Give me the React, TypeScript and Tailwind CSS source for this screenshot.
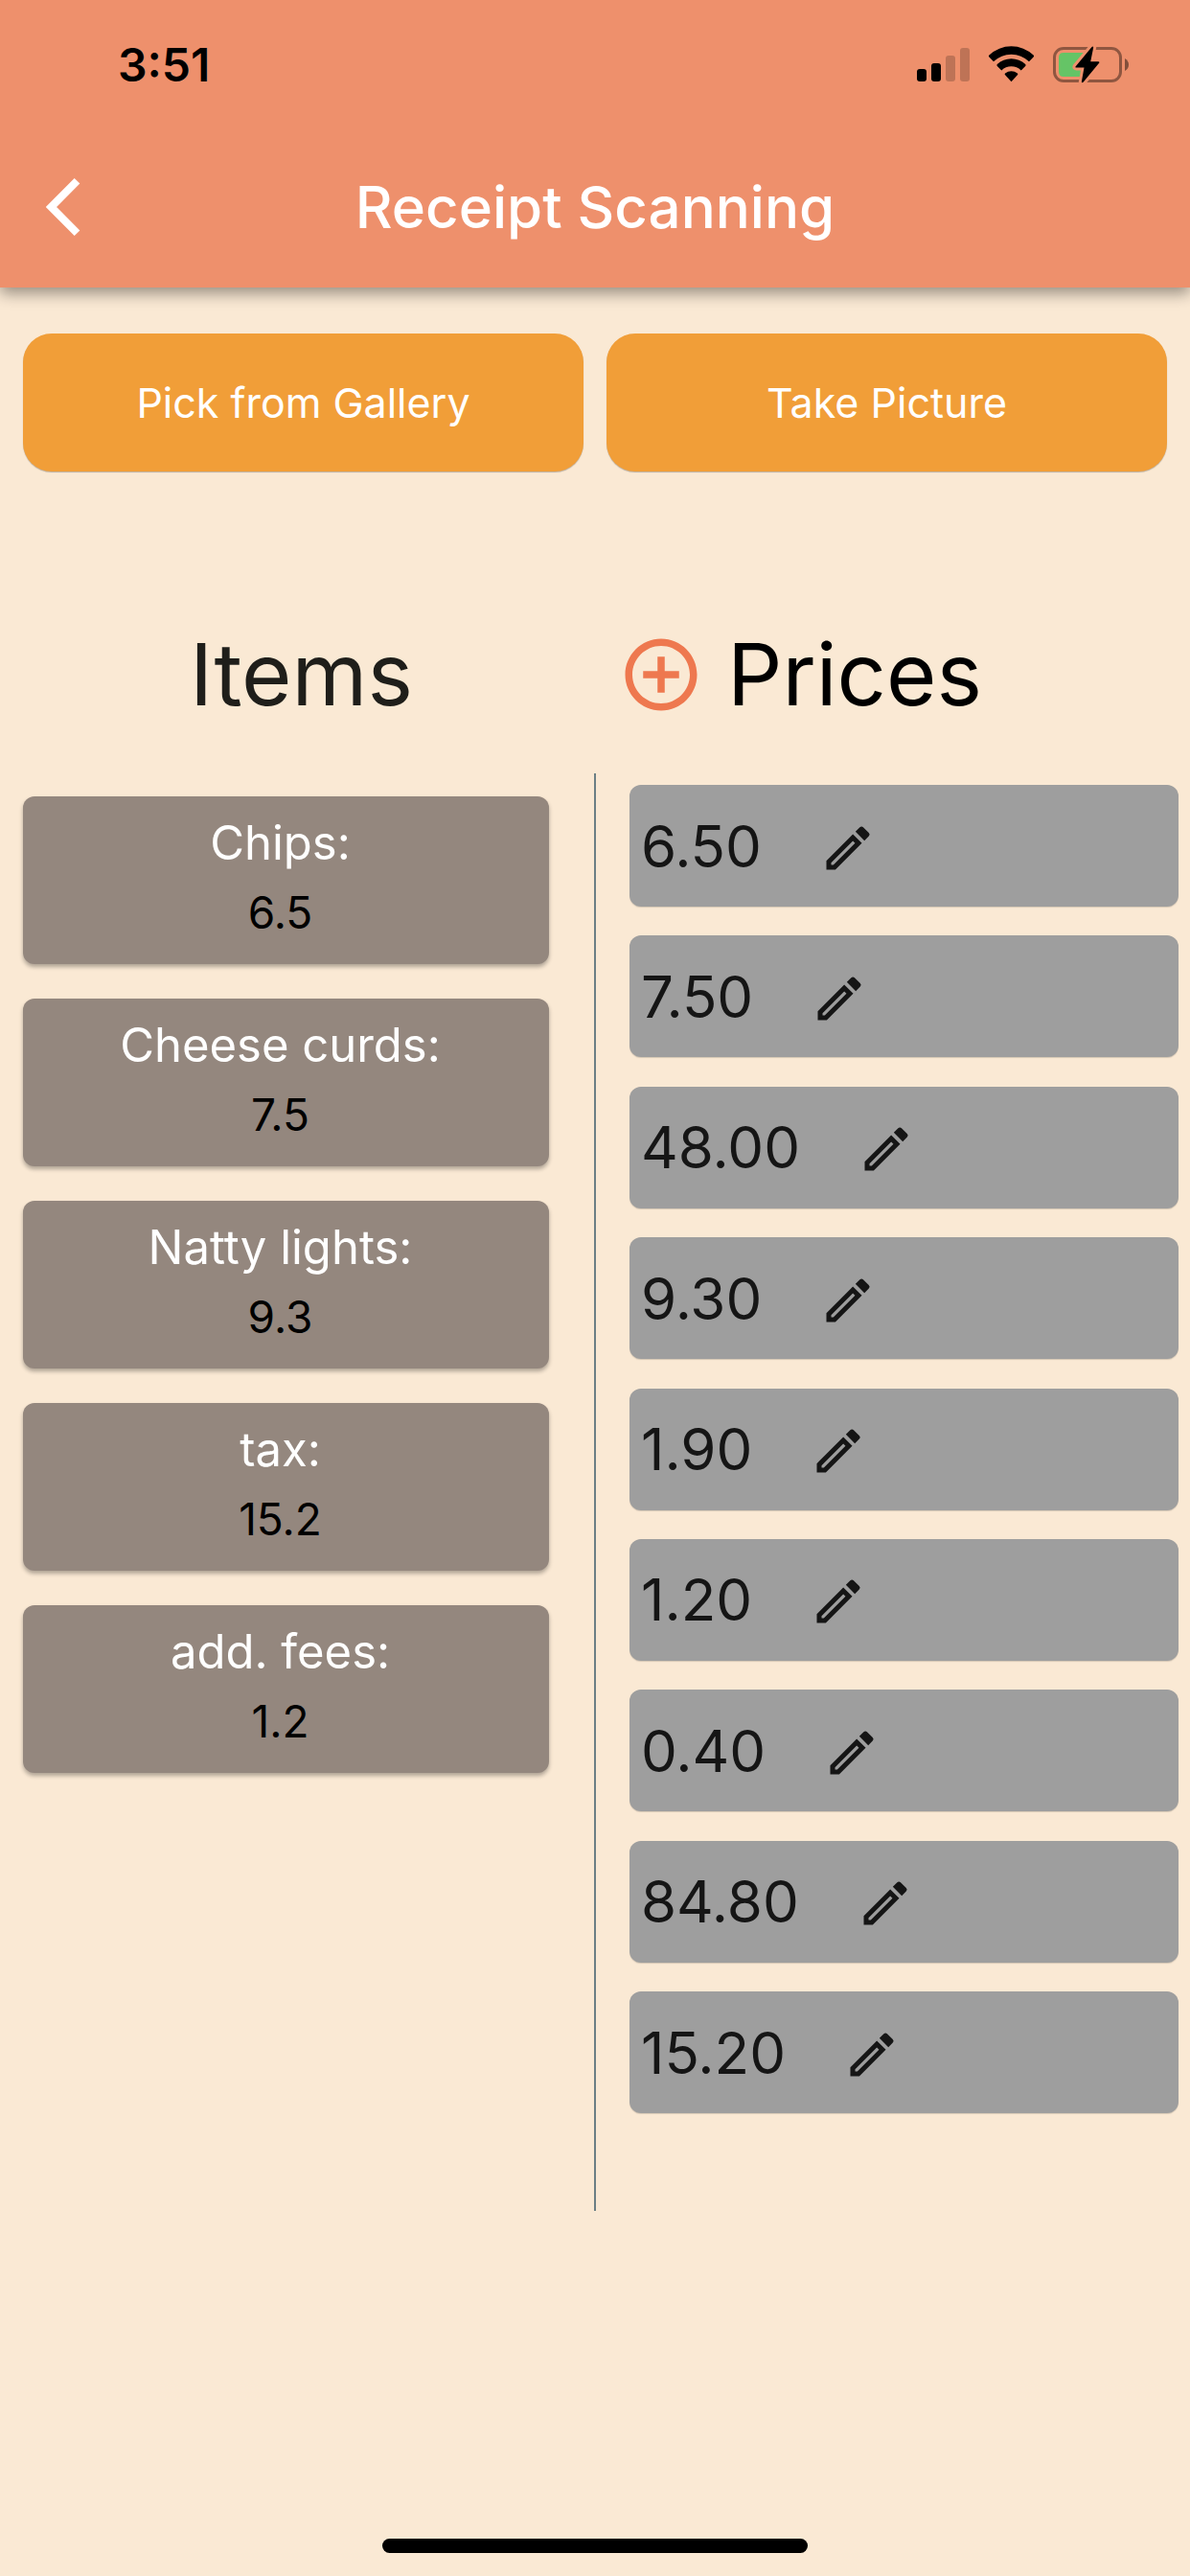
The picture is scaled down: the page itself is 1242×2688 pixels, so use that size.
import { MdAddCircleOutline, MdOutlineEdit } from "react-icons/md";

const items = [
  { name: "Chips:", price: "6.5" },
  { name: "Cheese curds:", price: "7.5" },
  { name: "Natty lights:", price: "9.3" },
  { name: "tax:", price: "15.2" },
  { name: "add. fees:", price: "1.2" },
];

const prices = ["6.50", "7.50", "48.00", "9.30", "1.90", "1.20", "0.40", "84.80", "15.20"];

function StatusIcons() {
  return (
    <svg width="222" height="40" viewBox="957 48 222 40" role="img" aria-label="Signal, Wi-Fi and battery charging">
      <rect x="957" y="72" width="10" height="13" rx="3" />
      <rect x="972" y="66" width="10" height="19" rx="3" />
      <g fillOpacity="0.2">
        <rect x="987" y="58" width="10" height="27" rx="3" />
        <rect x="1002" y="50" width="10" height="35" rx="3" />
      </g>
      <path d="M1037 64.2 L1032.4 59.6 Q1031.4 58.6 1032.4 57.6 A33.5 33.5 0 0 1 1078.6 57.6 Q1079.6 58.6 1078.6 59.6 L1074 64.2 A26.5 26.5 0 0 0 1037 64.2 Z" />
      <path d="M1045.3 73.4 L1040.8 68.9 Q1039.9 68 1040.8 67.1 A21.5 21.5 0 0 1 1070.2 67.1 Q1071.1 68 1070.2 68.9 L1065.7 73.4 A14.8 14.8 0 0 0 1045.3 73.4 Z" />
      <path d="M1055.5 85.3 L1048.9 78.1 Q1048.2 77.2 1049.1 76.5 A10.5 10.5 0 0 1 1061.9 76.5 Q1062.8 77.2 1062.1 78.1 Z" />
      <rect x="1100.5" y="50.5" width="69" height="34" rx="9.5" fill="none" stroke="#000" strokeOpacity="0.4" strokeWidth="3" />
      <path d="M1174 61 Q1178 63.5 1178 67.5 Q1178 71.5 1174 74 Z" fillOpacity="0.45" />
      <path d="M1110 55 H1136 L1128 80 H1110 Q1105 80 1105 75 V60 Q1105 55 1110 55 Z" fill="#65C466" />
      <path
        d="M1139.5 49 L1122.5 69.5 Q1122 70.5 1123.5 70.5 H1131.5 L1128.8 85.5 Q1129.5 87 1130.8 85.5 L1147.3 65.5 Q1147.6 64.3 1146.3 64.3 H1138.2 L1141.2 49.5 Q1140.6 47.8 1139.5 49 Z"
        fill="#000"
        stroke="#EE906C"
        strokeWidth="6"
        strokeLinejoin="round"
        paintOrder="stroke"
      />
    </svg>
  );
}

function Header() {
  return (
    <header className="relative bg-[#EE906C] shadow-[0_6px_15px_rgba(0,0,0,0.4)]">
      <div className="flex h-[132px] items-center justify-between pt-1 pr-[63px] pl-[123px]">
        <time className="text-[48px] leading-none font-semibold text-black">3:51</time>
        <StatusIcons />
      </div>
      <div className="grid h-[168px] grid-cols-[144px_1fr_144px] items-center">
        <button type="button" aria-label="Back" className="flex h-full items-center pl-12">
          <svg width="36" height="60" viewBox="0 0 36 60" fill="none" stroke="#fff" strokeWidth="8">
            <path d="M32.5 2.8 L5.5 30 L32.5 57.2" />
          </svg>
        </button>
        <h1 className="text-center text-[60px] leading-none font-medium text-white">Receipt Scanning</h1>
      </div>
    </header>
  );
}

function ActionButton({ label }: { label: string }) {
  return (
    <button
      type="button"
      className="h-36 flex-1 rounded-[30px] bg-[#F19E38] text-[43px] leading-none text-white shadow-[0_1px_1px_rgba(0,0,0,0.25)]"
    >
      {label}
    </button>
  );
}

function ItemCard({ name, price }: { name: string; price: string }) {
  return (
    <button
      type="button"
      className="flex h-[175px] w-full flex-col items-center rounded-xl bg-[#94877E] pt-[13px] pr-3 leading-[72px] shadow-[0_3px_4px_rgba(0,0,0,0.3)]"
    >
      <span className="text-[49px] text-white">{name}</span>
      <span className="text-[46px] text-black">{price}</span>
    </button>
  );
}

function PriceCard({ price }: { price: string }) {
  return (
    <li className="flex h-[127px] items-center gap-[60px] rounded-xl bg-[#9E9E9E] pl-3 text-[#151515] shadow-[0_1px_1px_rgba(0,0,0,0.15)]">
      <span className="text-[60px] leading-none">{price}</span>
      <button type="button" aria-label={`Edit ${price}`} className="pt-1">
        <MdOutlineEdit size={60} />
      </button>
    </li>
  );
}

export default function App() {
  return (
    <div className="flex min-h-screen flex-col bg-[#FAE9D4] font-['Inter',sans-serif]">
      <Header />
      <main className="flex flex-1 flex-col">
        <div className="flex gap-6 px-6 pt-12">
          <ActionButton label="Pick from Gallery" />
          <ActionButton label="Take Picture" />
        </div>
        <div className="mt-[167px] grid h-[90px] grid-cols-2 items-center text-[90px] leading-none">
          <h2 className="pl-2 text-center text-[#1F1E1A]">Items</h2>
          <div className="flex items-center gap-6 pl-6">
            <button type="button" aria-label="Add price" className="text-[#EE784F]">
              <MdAddCircleOutline size={90} />
            </button>
            <h2 className="text-black">Prices</h2>
          </div>
        </div>
        <div className="mt-[58px] grid min-h-[1500px] grid-cols-[1fr_2px_1fr]">
          <div className="flex flex-col gap-9 pt-6 pr-[47px] pl-6">
            {items.map((item) => (
              <ItemCard key={item.name} name={item.name} price={item.price} />
            ))}
          </div>
          <div className="bg-[#6B7F84]" />
          <ul className="flex flex-col justify-between pt-3 pr-3 pb-[102px] pl-[35px]">
            {prices.map((price) => (
              <PriceCard key={price} price={price} />
            ))}
          </ul>
        </div>
      </main>
      <footer className="flex justify-center pb-6">
        <div className="h-[15px] w-[444px] rounded-full bg-black" />
      </footer>
    </div>
  );
}
